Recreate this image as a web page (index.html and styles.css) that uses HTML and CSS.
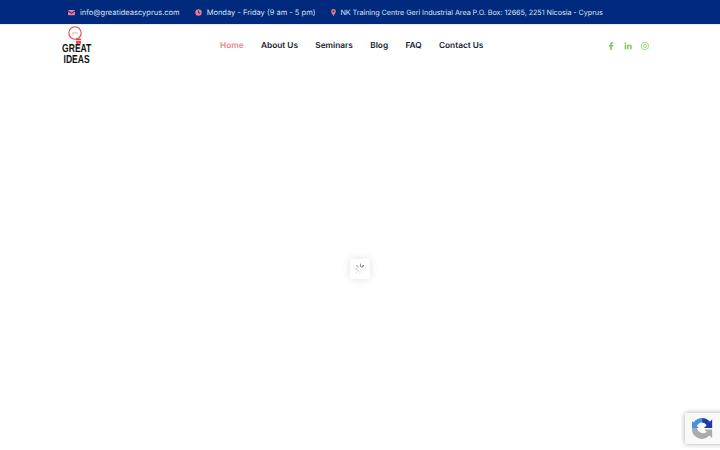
FILE: index.html
```html
<!DOCTYPE html>
<html lang="en">
<head>
<meta charset="utf-8">
<title>Great Ideas</title>
<link rel="stylesheet" href="styles.css">
</head>
<body>
<div class="topbar">
  <div class="topbar-item">
    <svg class="ti" viewBox="0 0 12 12"><path d="M0 2.500A1 1 0 0 1 1 1.500h10a1 1 0 0 1 1 1L6 6.300 0 2.500z"/><path d="M0 4.200V9.500a1 1 0 0 0 1 1h10a1 1 0 0 0 1-1V4.200L6 8z"/></svg>
    <span>info@greatideascyprus.com</span>
  </div>
  <div class="topbar-item">
    <svg class="ti" viewBox="0 0 12 12"><path fill-rule="evenodd" d="M6 .5a5.500 5.500 0 1 0 0 11 5.500 5.500 0 0 0 0-11zM5.400 2.700h1.200v3l2 1.300-.6 1-2.600-1.700z"/></svg>
    <span>Monday - Friday (9 am - 5 pm)</span>
  </div>
  <div class="topbar-item address">
    <svg class="ti" viewBox="0 0 12 12"><path fill-rule="evenodd" d="M6 0a4 4 0 0 0-4 4c0 2.800 4 8 4 8s4-5.200 4-8a4 4 0 0 0-4-4zm0 2.500a1.500 1.500 0 1 1 0 3 1.500 1.500 0 0 1 0-3z"/></svg>
    <span>NK Training Centre Geri Industrial Area P.O. Box: 12665, 2251 Nicosia - Cyprus</span>
  </div>
</div>
<header class="header">
  <a class="logo" href="#">
    <svg class="logo-mark" viewBox="0 0 16 18"><circle cx="7" cy="7" r="6.200" fill="none" stroke="#e0454f" stroke-width="1.100"/><path d="M4.500 7h5" stroke="#e0454f" stroke-width="1" stroke-dasharray="1 1"/><path d="M8 12.500h5v1.500h-5zM8 14.800h5v3h-5z" fill="#e0454f"/></svg>
    <span class="logo-text">GREAT</span>
    <span class="logo-text">IDEAS</span>
  </a>
  <nav class="nav">
    <a class="nav-link active" href="#">Home</a>
    <a class="nav-link" href="#">About Us</a>
    <a class="nav-link" href="#">Seminars</a>
    <a class="nav-link" href="#">Blog</a>
    <a class="nav-link" href="#">FAQ</a>
    <a class="nav-link" href="#">Contact Us</a>
  </nav>
  <div class="social">
    <svg class="si" viewBox="0 0 10 12"><path d="M6.300 12V6.700h1.800l.3-2.100H6.300V3.300c0-.6.200-1 1-1h1.200V.4C8.300.4 7.600.3 6.800.3 5.100.3 4 1.300 4 3.100v1.500H2.100v2.100H4V12z"/></svg>
    <svg class="si" viewBox="0 0 12 12"><path d="M1 4h2.200v7H1zM2.100.7a1.300 1.300 0 1 1 0 2.600 1.300 1.300 0 0 1 0-2.600zM4.700 4h2.100v1c.4-.7 1.200-1.200 2.200-1.200 2.200 0 2.600 1.400 2.600 3.300V11H9.400V7.600c0-.8 0-1.900-1.200-1.900S6.900 6.600 6.900 7.500V11H4.700z"/></svg>
    <svg class="si" viewBox="0 0 12 12"><rect x="1" y="1" width="10" height="10" rx="3" fill="none" stroke="currentColor" stroke-width="1"/><circle cx="6" cy="6" r="2.300" fill="none" stroke="currentColor" stroke-width="1"/><circle cx="8.900" cy="3.100" r=".6"/></svg>
  </div>
</header>
<div class="loader">
  <svg class="spinner" viewBox="0 0 12 12">
    <g stroke-width="1.100" stroke-linecap="round">
      <path d="M6.500 1v2.500" stroke="#999999"/>
      <path d="M9.500 2.500L7.800 4.200" stroke="#777777"/>
      <path d="M11 6H8.500" stroke="#f0f0f0"/>
      <path d="M9.500 9.500L7.800 7.800" stroke="#f4f4f4"/>
      <path d="M6 11V8.500" stroke="#ececec"/>
      <path d="M2.500 9.500L4.200 7.800" stroke="#dddddd"/>
      <path d="M1 6h2.500" stroke="#cccccc"/>
      <path d="M2.500 2.500L4.200 4.200" stroke="#b4b4b4"/>
    </g>
  </svg>
</div>
<div class="recaptcha">
  <svg class="rc" viewBox="0 0 24 24">
    <path d="M11 1a11 11 0 0 1 8.600 4.200L22 2.500V12h-9l3-3a6 6 0 0 0-5-3z" fill="#1c3aa9"/>
    <path d="M11 1A11 11 0 0 0 1.800 6L0 4.300V12h7.500L5.300 9.700A6.500 6.500 0 0 1 11 6z" fill="#4a90e2"/>
    <path d="M0 12h5.500a6.500 6.500 0 0 0 10.700 4L13.500 13.500H22V23l-3-2.700A11 11 0 0 1 0 12z" fill="#ababab"/>
  </svg>
</div>
</body>
</html>
```
FILE: styles.css
```css
* { box-sizing: border-box; }
html, body { margin: 0; padding: 0; height: 100%; overflow: hidden; background: #fff; }
body { font-family: "Inter", "Open Sans", sans-serif; text-rendering: geometricPrecision; }
a { text-decoration: none; }
.topbar {
  height: 24px;
  background: #002a7d;
  color: #d9e0f0;
  display: flex;
  align-items: center;
  gap: 15px;
  padding-left: 68px;
  font-size: 7.500px;
  box-shadow: 0 1px 1px rgba(0,0,0,.08);
}
.topbar-item { display: flex; align-items: center; gap: 5px; white-space: nowrap; }
.address { font-size: 7.250px; letter-spacing: -.07px; gap: 3px; }
.ti { width: 7px; height: 7px; fill: #ea7a90; flex: none; }
.header {
  height: 44px;
  display: flex;
  align-items: center;
  padding: 0 71px 0 62px;
}
.logo { display: flex; flex-direction: column; align-items: center; width: 30px; color: #111; margin-bottom: 1px; }
.logo-mark { width: 16px; height: 18px; margin: 1px 0 0 -2px; }
.logo-text {
  font-family: "Liberation Sans", sans-serif;
  font-size: 11.500px;
  line-height: 11px;
  font-weight: 700;
  transform: scaleX(.74);
}
.nav { display: flex; gap: 17.300px; margin-left: 128px; flex: 1; }
.nav-link { font-size: 8.300px; font-weight: 600; color: #141a2e; white-space: nowrap; }
.nav-link.active { color: #e8858c; }
.social { display: flex; align-items: center; gap: 9px; color: #76c850; }
.si { width: 8px; height: 8px; fill: currentColor; }
.loader {
  position: absolute;
  left: 350px;
  top: 259px;
  width: 20px;
  height: 20px;
  background: #fff;
  box-shadow: 0 0 8px rgba(0,0,0,.13);
  display: flex;
  align-items: center;
  justify-content: center;
}
.spinner { width: 12px; height: 12px; }
.recaptcha {
  position: fixed;
  left: 685px;
  top: 413px;
  width: 60px;
  height: 31px;
  background: #f9f9f9;
  box-shadow: 0 0 5px rgba(0,0,0,.35);
  border-radius: 2px;
  padding: 3px 0 0 7px;
}
.rc { width: 22px; height: 24px; display: block; }
```
